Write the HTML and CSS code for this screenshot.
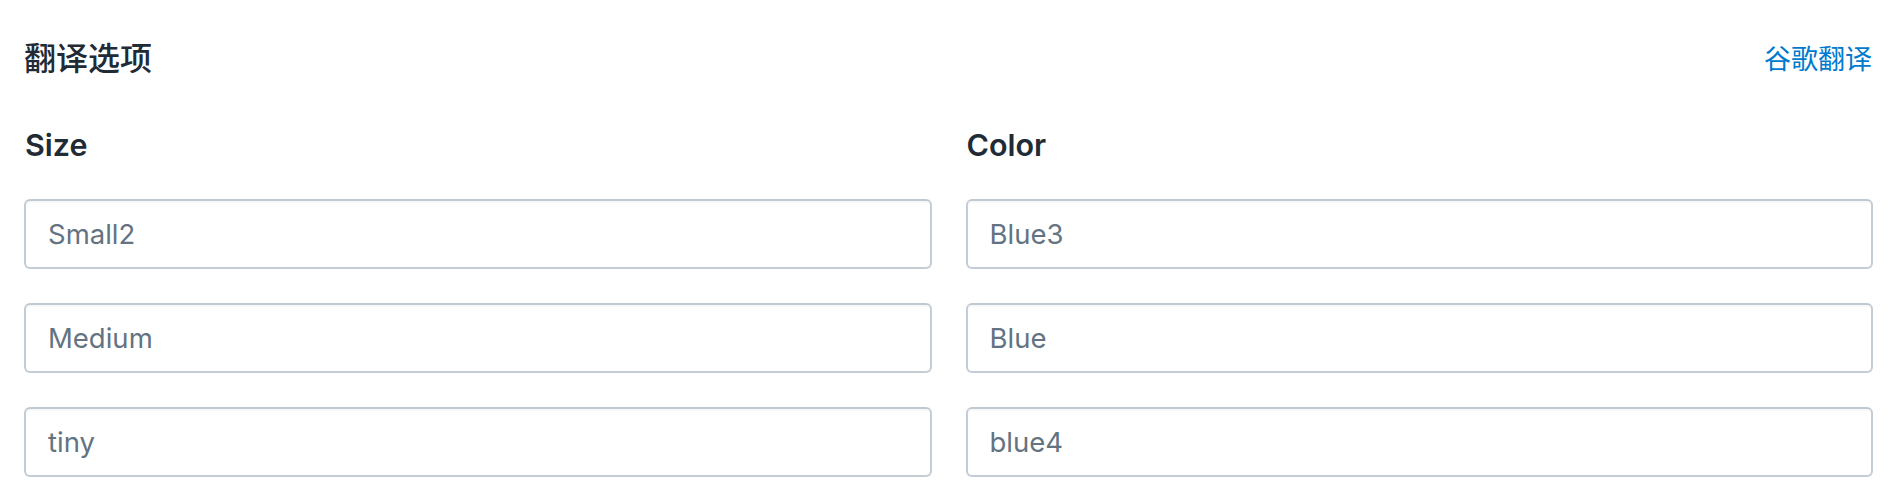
FILE: index.html
```html
<!DOCTYPE html>
<html lang="zh-CN">
<head>
<meta charset="utf-8">
<title>翻译选项</title>
<link rel="stylesheet" href="styles.css">
</head>
<body>
<div class="card">
  <div class="card-header">
    <h2 class="title">翻译选项</h2>
    <a class="link" href="#">谷歌翻译</a>
  </div>
  <div class="columns">
    <div class="col">
      <div class="label">Size</div>
      <div class="fields">
        <input class="field" type="text" placeholder="Small2">
        <input class="field" type="text" placeholder="Medium">
        <input class="field" type="text" placeholder="tiny">
      </div>
    </div>
    <div class="col">
      <div class="label">Color</div>
      <div class="fields">
        <input class="field" type="text" placeholder="Blue3">
        <input class="field" type="text" placeholder="Blue">
        <input class="field" type="text" placeholder="blue4">
      </div>
    </div>
  </div>
</div>
</body>
</html>
```

FILE: styles.css
```css
html, body {
  margin: 0;
  padding: 0;
  background: #ffffff;
}

body {
  font-family: Inter, "Noto Sans", "Noto Sans CJK SC", sans-serif;
  color: #212b36;
}

.card {
  padding: 36px 31px 0 24px;
}

.card-header {
  display: flex;
  justify-content: space-between;
  align-items: center;
  height: 40px;
}

.title {
  margin: 0;
  font-family: "Noto Sans CJK SC", sans-serif;
  font-size: 32px;
  font-weight: 500;
  line-height: 40px;
  color: #212b36;
}

.link {
  font-family: "Noto Sans CJK SC", sans-serif;
  font-size: 27px;
  line-height: 40px;
  color: #007ace;
  text-decoration: none;
  margin-top: 4px;
  margin-right: 1px;
}

.columns {
  display: grid;
  grid-template-columns: 1fr 1fr;
  column-gap: 34px;
  margin-top: 49px;
}

.label {
  font-size: 30.5px;
  font-weight: 600;
  line-height: 40px;
  color: #212b36;
  padding-left: 1px;
}

.fields {
  display: flex;
  flex-direction: column;
  gap: 34px;
  margin-top: 34px;
}

.field {
  box-sizing: border-box;
  display: block;
  width: 100%;
  height: 70px;
  margin: 0;
  padding: 0 22px;
  border: 2px solid #c4cdd5;
  border-top-color: #bfc9d2;
  border-radius: 6px;
  background: #ffffff;
  box-shadow: inset 0 2px 0 0 rgba(99, 115, 129, 0.05);
  font-family: Inter, "Noto Sans", sans-serif;
  font-size: 27.5px;
  color: #212b36;
  outline: none;
}

.field::placeholder {
  color: #637381;
  opacity: 1;
}
```
